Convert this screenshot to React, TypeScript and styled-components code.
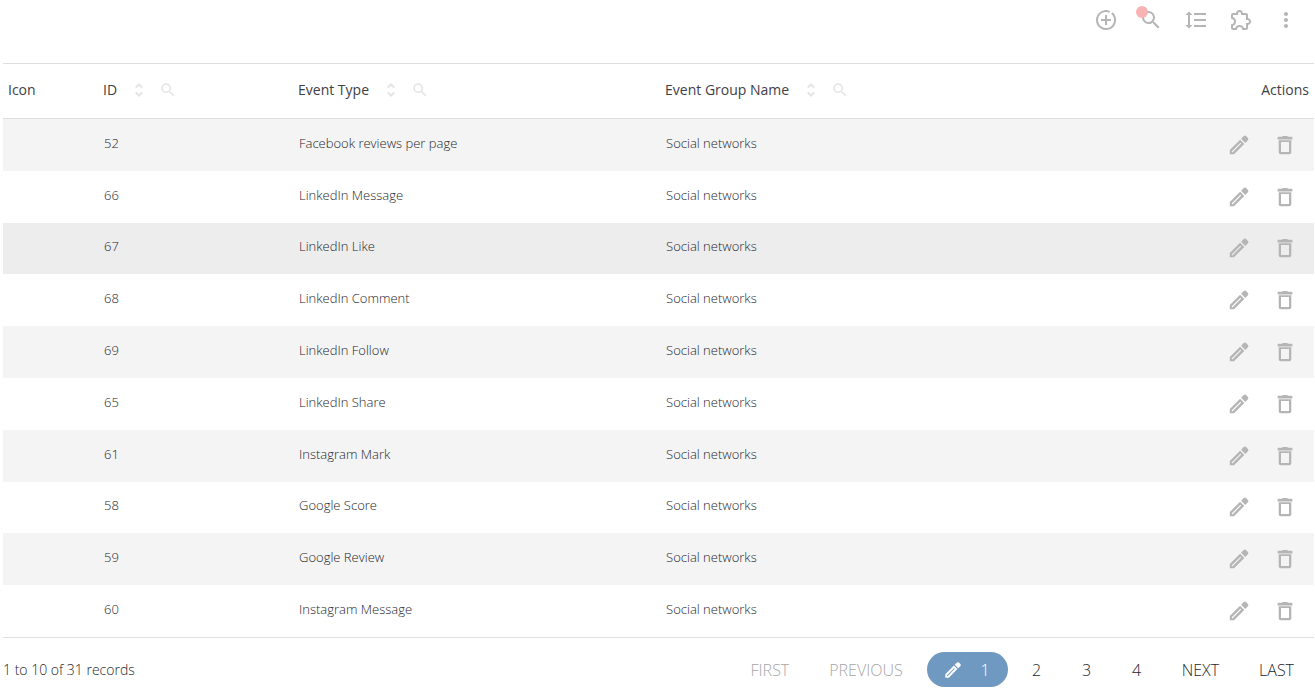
import React from 'react';
import styled, { createGlobalStyle } from 'styled-components';

const GlobalStyle = createGlobalStyle`
  *, *::before, *::after { box-sizing: border-box; }
  body {
    margin: 0;
    background: #fff;
    color: #26272c;
    font-family: "Open Sans", "Noto Sans", sans-serif;
    font-weight: 300;
  }
  button { font: inherit; color: inherit; background: none; border: 0; padding: 0; cursor: pointer; }
`;

const Page = styled.main`
  padding: 0 1px 0 3px;
`;

const Toolbar = styled.div`
  display: flex;
  justify-content: flex-end;
  gap: 21px;
  height: 63px;
  padding: 8px 16px 0 0;
`;

const IconButton = styled.button`
  position: relative;
  display: inline-flex;
  align-items: center;
  justify-content: center;
  width: 24px;
  height: 24px;
  color: #b5b5b5;
`;

const Dot = styled.span`
  position: absolute;
  top: -2px;
  left: -3px;
  width: 12px;
  height: 12px;
  border-radius: 50%;
  background: #f8b4b4;
`;

const Table = styled.table`
  width: 100%;
  height: 575px;
  border-collapse: separate;
  border-spacing: 0;
  border-bottom: 1px solid #dedede;
  table-layout: fixed;
`;

const Th = styled.th<{ $width?: string; $end?: boolean }>`
  width: ${(p) => p.$width ?? 'auto'};
  height: 56px;
  padding: 0 5px 2px;
  border-top: 1px solid #dedede;
  border-bottom: 1px solid #dedede;
  color: #3f4047;
  font-size: 14px;
  font-weight: 400;
  line-height: 20px;
  text-align: ${(p) => (p.$end ? 'right' : 'left')};
  white-space: nowrap;
`;

const Heading = styled.div`
  display: flex;
  align-items: center;
`;

const HeadTools = styled.span`
  display: inline-flex;
  gap: 11px;
  margin-left: 13px;
`;

const HeadButton = styled.button`
  display: inline-flex;
  width: 18px;
  height: 18px;
  color: #e4e4e4;
`;

const Row = styled.tr<{ $active?: boolean }>`
  height: 51px;
  &:nth-child(odd) { background: ${(p) => (p.$active ? '#ededed' : '#f4f4f4')}; }
`;

const Td = styled.td`
  padding: 0 5px 4px 6px;
  font-size: 13px;
  line-height: 18px;
`;

const ActionsTd = styled.td`
  padding: 0;
`;

const Actions = styled.div`
  display: flex;
  justify-content: flex-end;
  gap: 22px;
  padding-right: 17px;
`;

const Footer = styled.footer`
  display: flex;
  align-items: center;
  justify-content: space-between;
  padding-top: 14px;
  font-size: 14px;
  line-height: 20px;
`;

const Pager = styled.nav`
  display: flex;
  align-items: center;
  font-size: 16px;
`;

const PageButton = styled.button`
  min-width: 50px;
  height: 35px;
  padding: 0 20px;
  &:disabled { color: #a6a6a6; cursor: default; }
`;

const CurrentPage = styled.button`
  display: flex;
  align-items: center;
  justify-content: space-between;
  width: 81px;
  height: 35px;
  margin: 0 4px;
  padding: 0 18px 0 16px;
  border-radius: 18px;
  background: #7099c2;
  color: #fff;
`;

const paths = {
  search:
    'M15.5 14h-.79l-.28-.27A6.47 6.47 0 0 0 16 9.5 6.5 6.5 0 1 0 9.5 16c1.61 0 3.09-.59 4.23-1.57l.27.28v.79l5 4.99L20.49 19l-4.99-5zm-6 0C7.01 14 5 11.99 5 9.5S7.01 5 9.5 5 14 7.01 14 9.5 11.99 14 9.5 14z',
  spacing:
    'M10 13H22V11H10M10 19H22V17H10M10 7H22V5H10M6 7H8.5L5 3.5L1.5 7H4V17H1.5L5 20.5L8.5 17H6V7Z',
  puzzle:
    'M22,13.5C22,15.26 20.7,16.72 19,16.96V20A2,2 0 0,1 17,22H13.2V21.7A2.7,2.7 0 0,0 10.5,19C9,19 7.8,20.21 7.8,21.7V22H4A2,2 0 0,1 2,20V16.2H2.3C3.79,16.2 5,15 5,13.5C5,12 3.79,10.8 2.3,10.8H2V7A2,2 0 0,1 4,5H7.04C7.28,3.3 8.74,2 10.5,2C12.26,2 13.72,3.3 13.96,5H17A2,2 0 0,1 19,7V10.04C20.7,10.28 22,11.74 22,13.5M17,15H18.5A1.5,1.5 0 0,0 20,13.5A1.5,1.5 0 0,0 18.5,12H17V7H12V5.5A1.5,1.5 0 0,0 10.5,4A1.5,1.5 0 0,0 9,5.5V7H4V9.12C5.76,9.8 7,11.5 7,13.5C7,15.5 5.75,17.2 4,17.88V20H6.12C6.8,18.25 8.5,17 10.5,17C12.5,17 14.2,18.25 14.88,20H17V15Z',
  more: 'M12 8c1.1 0 2-.9 2-2s-.9-2-2-2-2 .9-2 2 .9 2 2 2zm0 2c-1.1 0-2 .9-2 2s.9 2 2 2 2-.9 2-2-.9-2-2-2zm0 6c-1.1 0-2 .9-2 2s.9 2 2 2 2-.9 2-2-.9-2-2-2z',
  pencil:
    'M2.8 17V21.2H7L17.3 10.9 13.1 6.7ZM5.4 19.4 4.6 18.6 13.4 9.8 14.2 10.6ZM14.1 5.7 18.3 9.9 20.9 7.3A1.8 1.8 0 0 0 20.9 4.9L19.1 3.1A1.8 1.8 0 0 0 16.7 3.1Z',
  trash:
    'M5.7 7.2V19.2A2 2 0 0 0 7.7 21.2H16.3A2 2 0 0 0 18.3 19.2V7.2ZM8 9H16V19.1H8ZM9 3.8 9.8 3H14.2L15 3.8H18.6Q19.4 3.8 19.4 4.6V6.4H4.6V4.6Q4.6 3.8 5.4 3.8Z',
  sort: 'M12 6.4 15.4 9.8 17.3 7.9 12 2.6 6.7 7.9 8.6 9.8ZM12 17.6 8.6 14.2 6.7 16.1 12 21.4 17.3 16.1 15.4 14.2Z',
};

function Icon({ name, size = 24 }: { name: keyof typeof paths; size?: number }) {
  return (
    <svg width={size} height={size} viewBox="0 0 24 24" fill="currentColor" fillRule="evenodd" aria-hidden="true">
      <path d={paths[name]} />
    </svg>
  );
}

function AddIcon() {
  return (
    <svg width="24" height="24" viewBox="0 0 24 24" fill="none" stroke="currentColor" strokeWidth="2" aria-hidden="true">
      <path d="M12 7v10M7 12h10" />
      <path d="M17.8 5.1A9 9 0 1 1 15.7 3.8" />
    </svg>
  );
}

function ColumnHeading({ label }: { label: string }) {
  return (
    <Heading>
      {label}
      <HeadTools>
        <HeadButton type="button" aria-label={`Sort by ${label}`}><Icon name="sort" size={18} /></HeadButton>
        <HeadButton type="button" aria-label={`Search ${label}`}><Icon name="search" size={18} /></HeadButton>
      </HeadTools>
    </Heading>
  );
}

const records = [
  { id: 52, type: 'Facebook reviews per page' },
  { id: 66, type: 'LinkedIn Message' },
  { id: 67, type: 'LinkedIn Like', active: true },
  { id: 68, type: 'LinkedIn Comment' },
  { id: 69, type: 'LinkedIn Follow' },
  { id: 65, type: 'LinkedIn Share' },
  { id: 61, type: 'Instagram Mark' },
  { id: 58, type: 'Google Score' },
  { id: 59, type: 'Google Review' },
  { id: 60, type: 'Instagram Message' },
];

export default function App() {
  return (
    <Page>
      <GlobalStyle />
      <Toolbar>
        <IconButton type="button" aria-label="Add"><AddIcon /></IconButton>
        <IconButton type="button" aria-label="Search"><Icon name="search" /><Dot /></IconButton>
        <IconButton type="button" aria-label="Row spacing"><Icon name="spacing" /></IconButton>
        <IconButton type="button" aria-label="Extensions"><Icon name="puzzle" /></IconButton>
        <IconButton type="button" aria-label="More"><Icon name="more" /></IconButton>
      </Toolbar>
      <Table>
        <thead>
          <tr>
            <Th $width="95px">Icon</Th>
            <Th $width="195px"><ColumnHeading label="ID" /></Th>
            <Th $width="28%"><ColumnHeading label="Event Type" /></Th>
            <Th><ColumnHeading label="Event Group Name" /></Th>
            <Th $width="110px" $end>Actions</Th>
          </tr>
        </thead>
        <tbody>
          {records.map((r) => (
            <Row key={r.id} $active={r.active}>
              <Td />
              <Td>{r.id}</Td>
              <Td>{r.type}</Td>
              <Td>Social networks</Td>
              <ActionsTd>
                <Actions>
                  <IconButton type="button" aria-label={`Edit ${r.type}`}><Icon name="pencil" /></IconButton>
                  <IconButton type="button" aria-label={`Delete ${r.type}`}><Icon name="trash" /></IconButton>
                </Actions>
              </ActionsTd>
            </Row>
          ))}
        </tbody>
      </Table>
      <Footer>
        <span>1 to 10 of 31 records</span>
        <Pager aria-label="Pagination">
          <PageButton type="button" disabled>FIRST</PageButton>
          <PageButton type="button" disabled>PREVIOUS</PageButton>
          <CurrentPage type="button" aria-current="page"><Icon name="pencil" size={20} />1</CurrentPage>
          <PageButton type="button">2</PageButton>
          <PageButton type="button">3</PageButton>
          <PageButton type="button">4</PageButton>
          <PageButton type="button">NEXT</PageButton>
          <PageButton type="button">LAST</PageButton>
        </Pager>
      </Footer>
    </Page>
  );
}
